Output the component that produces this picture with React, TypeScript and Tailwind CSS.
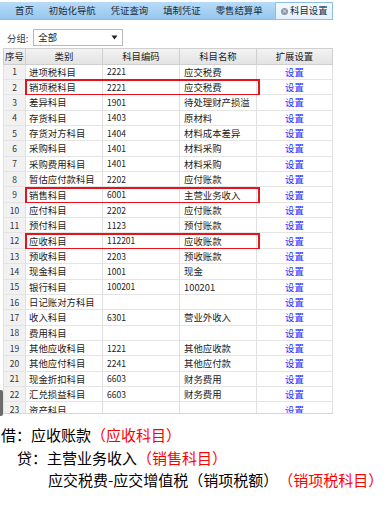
import React from 'react';

type Row = {
  no: number;
  kind: string;
  code: string;
  name: string;
  mark?: boolean;
};

const rows: Row[] = [
  { no: 1, kind: '进项税科目', code: '2221', name: '应交税费' },
  { no: 2, kind: '销项税科目', code: '2221', name: '应交税费', mark: true },
  { no: 3, kind: '差异科目', code: '1901', name: '待处理财产损溢' },
  { no: 4, kind: '存货科目', code: '1403', name: '原材料' },
  { no: 5, kind: '存货对方科目', code: '1404', name: '材料成本差异' },
  { no: 6, kind: '采购科目', code: '1401', name: '材料采购' },
  { no: 7, kind: '采购费用科目', code: '1401', name: '材料采购' },
  { no: 8, kind: '暂估应付款科目', code: '2202', name: '应付账款' },
  { no: 9, kind: '销售科目', code: '6001', name: '主营业务收入', mark: true },
  { no: 10, kind: '应付科目', code: '2202', name: '应付账款' },
  { no: 11, kind: '预付科目', code: '1123', name: '预付账款' },
  { no: 12, kind: '应收科目', code: '112201', name: '应收账款', mark: true },
  { no: 13, kind: '预收科目', code: '2203', name: '预收账款' },
  { no: 14, kind: '现金科目', code: '1001', name: '现金' },
  { no: 15, kind: '银行科目', code: '100201', name: '100201' },
  { no: 16, kind: '日记账对方科目', code: '', name: '' },
  { no: 17, kind: '收入科目', code: '6301', name: '营业外收入' },
  { no: 18, kind: '费用科目', code: '', name: '' },
  { no: 19, kind: '其他应收科目', code: '1221', name: '其他应收款' },
  { no: 20, kind: '其他应付科目', code: '2241', name: '其他应付款' },
  { no: 21, kind: '现金折扣科目', code: '6603', name: '财务费用' },
  { no: 22, kind: '汇兑损益科目', code: '6603', name: '财务费用' },
  { no: 23, kind: '资产科目', code: '', name: '' },
];

const tabs = ['首页', '初始化导航', '凭证查询', '填制凭证', '零售结算单'];

function TabBar() {
  return (
    <div className="w-[333px] pt-[2px] bg-white">
      <div className="flex h-[18px] items-end bg-gradient-to-b from-[#b8dbf7] to-[#95c7ef] border-b border-[#8cbde6]">
        <div className="flex h-full items-center pl-[15px] gap-[15px] text-[9.4px] text-[#1a2b3c]">
          {tabs.map((t) => (
            <span key={t} className="leading-none">{t}</span>
          ))}
        </div>
        <div className="ml-auto flex h-[17px] w-[58px] items-center gap-[2px] rounded-t-[2px] border border-b-0 border-[#8cbde6] bg-gradient-to-b from-[#f4f9fe] to-[#e4f1fc] pl-[5px] text-[9.4px] text-[#1a2b3c]">
          <span className="flex h-[7px] w-[7px] items-center justify-center rounded-full bg-[#8a97a4] text-[6px] leading-none text-white">
            ×
          </span>
          <span className="leading-none">科目设置</span>
        </div>
      </div>
    </div>
  );
}

function Filter() {
  return (
    <div className="flex h-[28px] items-end pb-[2px] pl-[7px] text-[9.4px] text-[#222]">
      <span className="mb-[3px] leading-none text-[#333]">分组:</span>
      <div className="ml-[5px] flex h-[17px] w-[90px] items-center justify-between border border-[#b9b9b9] bg-white pl-[4px] pr-[4px]">
        <span className="leading-none">全部</span>
        <svg width="7" height="5" viewBox="0 0 7 5">
          <path d="M0.5 0.5 L6.5 0.5 L3.5 4.5 Z" fill="#222" />
        </svg>
      </div>
    </div>
  );
}

function Header() {
  const cell = 'flex h-full items-center justify-center border-r border-[#cfcfcf]';
  return (
    <div className="flex h-[16.5px] bg-gradient-to-b from-[#f3f3f3] to-[#e3e3e3] border-y border-[#cfcfcf] text-[9.4px] text-[#222]">
      <div className={`${cell} w-[23px] border-l`}>序号</div>
      <div className={`${cell} w-[77px]`}>类别</div>
      <div className={`${cell} w-[77px]`}>科目编码</div>
      <div className={`${cell} w-[77px]`}>科目名称</div>
      <div className={`${cell} w-[76px]`}>扩展设置</div>
    </div>
  );
}

function TableRow({ row }: { row: Row }) {
  const cell = 'flex h-full items-center border-r border-[#e0e0e0] overflow-hidden whitespace-nowrap';
  return (
    <div className="relative flex h-[15.36px] shrink-0 border-b border-[#e4e4e4] bg-white text-[9.4px] text-[#222]">
      <div className={`${cell} w-[23px] justify-center border-l bg-[#f1f1f1] text-[8.5px] text-[#333]`}>{row.no}</div>
      <div className={`${cell} w-[77px] pl-[3px]`}>{row.kind}</div>
      <div className={`${cell} w-[77px] pl-[4px] text-[8.5px]`}>{row.code}</div>
      <div className={`${cell} w-[77px] pl-[4px]`}>{row.name}</div>
      <div className={`${cell} w-[76px] justify-center text-[#1f1fff]`}>设置</div>
      {row.mark && (
        <div className="absolute left-[22px] top-[-0.5px] h-[17px] w-[235px] border-2 border-[#e8121a]" />
      )}
    </div>
  );
}

export default function App() {
  return (
    <div
      className="relative h-[511px] w-[385px] overflow-hidden bg-white [text-spacing-trim:space-all]"
      style={{ fontFamily: '"Noto Sans CJK SC", "Noto Sans", sans-serif' }}
    >
      <TabBar />
      <Filter />
      <div className="ml-[3px] h-[365px] w-[330px] overflow-hidden">
        <Header />
        <div className="flex flex-col">
          {rows.map((r) => (
            <TableRow key={r.no} row={r} />
          ))}
        </div>
      </div>
      <div className="h-[1px] w-[333px] bg-[#d6d6d6]" />
      <div className="absolute left-0 top-[390px] h-[26px] w-[3px] rounded-r-[2px] bg-[#6b6b6b]" />

      <div className="mt-[13px] flex flex-col gap-[7.5px] text-[15px] leading-[15px] text-black">
        <div className="pl-[1px]">
          借：应收账款<span className="text-[#ff0000]">（应收科目）</span>
        </div>
        <div className="pl-[17px]">
          贷：主营业务收入<span className="text-[#ff0000]">（销售科目）</span>
        </div>
        <div className="pl-[48px] whitespace-nowrap">
          应交税费-应交增值税（销项税额）<span className="text-[#ff0000]">（销项税科目）</span>
        </div>
      </div>
    </div>
  );
}
